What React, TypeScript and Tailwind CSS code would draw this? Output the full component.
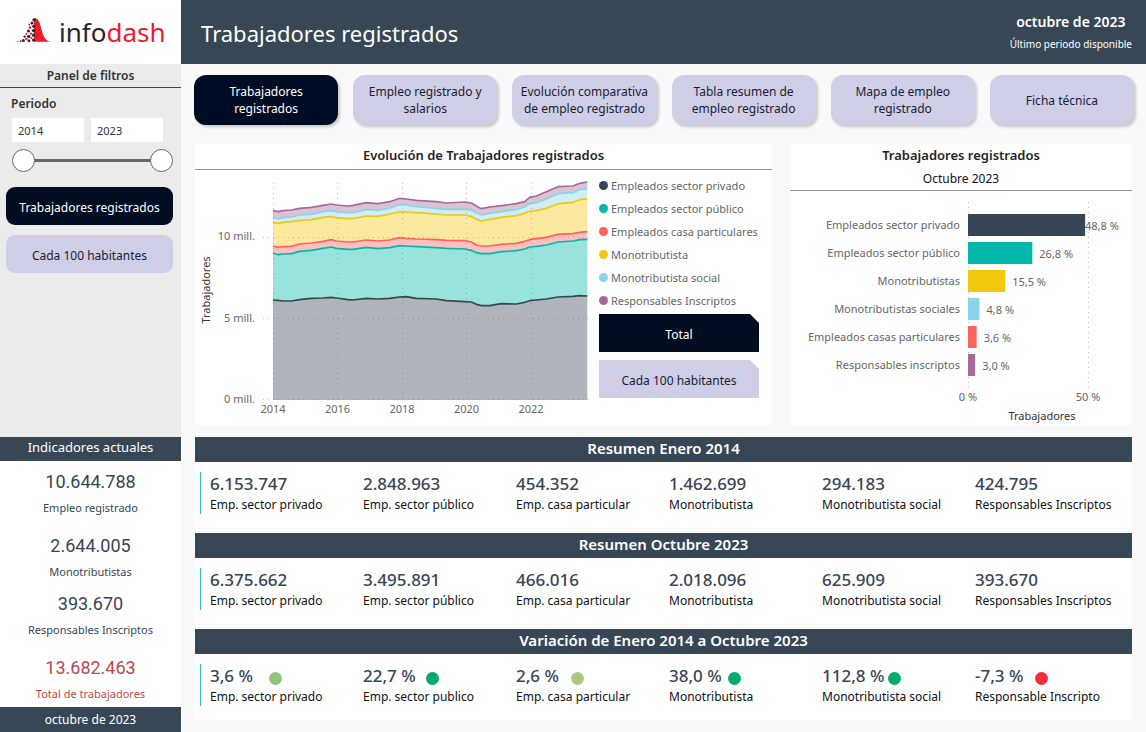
import { useState } from "react";
import clsx from "clsx";

const TABS = [
  "Trabajadores registrados",
  "Empleo registrado y salarios",
  "Evolución comparativa de empleo registrado",
  "Tabla resumen de empleo registrado",
  "Mapa de empleo registrado",
  "Ficha técnica",
];

// Stacked area plot, in plot units (943 wide, 654 down to the zero line).
const PLOT_X = [
  0, 15, 30, 55, 80, 115, 150, 175, 190, 225, 240, 280, 315, 350, 380, 400, 430, 490, 520, 575, 595,
  610, 625, 650, 685, 730, 755, 770, 790, 820, 855, 900, 920, 943,
];

const SERIES = [
  {
    name: "Empleados sector privado",
    color: "#374656",
    top: [
      354, 355, 357, 357, 353, 349, 348, 346, 348, 353, 354, 349, 351, 349, 345, 344, 349, 351, 356,
      359, 360, 367, 371, 371, 365, 366, 361, 356, 354, 351, 345, 343, 341, 342,
    ],
  },
  {
    name: "Empleados sector público",
    color: "#01b8aa",
    top: [
      213, 218, 216, 215, 208, 205, 199, 195, 199, 202, 202, 196, 200, 197, 191, 192, 194, 197, 199,
      201, 205, 212, 215, 215, 209, 206, 201, 195, 193, 189, 180, 177, 173, 172,
    ],
  },
  {
    name: "Empleados casa particulares",
    color: "#fd625e",
    top: [
      192, 196, 194, 193, 186, 183, 178, 173, 177, 180, 180, 174, 177, 174, 167, 169, 171, 173, 175,
      176, 180, 189, 192, 192, 187, 184, 178, 173, 170, 166, 157, 155, 151, 149,
    ],
  },
  {
    name: "Monotributista",
    color: "#f2c80f",
    top: [
      120, 124, 121, 119, 115, 113, 106, 104, 107, 110, 110, 102, 103, 96, 89, 90, 92, 96, 99, 99,
      103, 112, 117, 112, 106, 101, 94, 88, 86, 79, 65, 61, 53, 50,
    ],
  },
  {
    name: "Monotributista social",
    color: "#8ad4eb",
    top: [
      106, 111, 107, 105, 99, 97, 89, 86, 89, 92, 92, 82, 85, 78, 68, 69, 74, 79, 82, 82, 84, 93, 99,
      94, 89, 82, 75, 65, 62, 51, 35, 32, 23, 20,
    ],
  },
  {
    name: "Responsables Inscriptos",
    color: "#a66999",
    top: [
      85, 89, 86, 84, 79, 76, 70, 66, 69, 72, 70, 62, 65, 59, 49, 51, 55, 59, 63, 60, 63, 72, 80, 75,
      71, 65, 59, 46, 42, 29, 14, 12, 4, 0,
    ],
  },
];

const SHARES = [
  { name: "Empleados sector privado", value: 48.8, color: "#374656" },
  { name: "Empleados sector público", value: 26.8, color: "#01b8aa" },
  { name: "Monotributistas", value: 15.5, color: "#f2c80f" },
  { name: "Monotributistas sociales", value: 4.8, color: "#8ad4eb" },
  { name: "Empleados casas particulares", value: 3.6, color: "#fd625e" },
  { name: "Responsables inscriptos", value: 3.0, color: "#a66999" },
];

type Item = { value: string; label: string; dot?: string };

const SUMMARIES: { title: string; items: Item[] }[] = [
  {
    title: "Resumen Enero 2014",
    items: [
      { value: "6.153.747", label: "Emp. sector privado" },
      { value: "2.848.963", label: "Emp. sector público" },
      { value: "454.352", label: "Emp. casa particular" },
      { value: "1.462.699", label: "Monotributista" },
      { value: "294.183", label: "Monotributista social" },
      { value: "424.795", label: "Responsables Inscriptos" },
    ],
  },
  {
    title: "Resumen Octubre 2023",
    items: [
      { value: "6.375.662", label: "Emp. sector privado" },
      { value: "3.495.891", label: "Emp. sector público" },
      { value: "466.016", label: "Emp. casa particular" },
      { value: "2.018.096", label: "Monotributista" },
      { value: "625.909", label: "Monotributista social" },
      { value: "393.670", label: "Responsables Inscriptos" },
    ],
  },
  {
    title: "Variación de Enero 2014 a Octubre 2023",
    items: [
      { value: "3,6 %", label: "Emp. sector privado", dot: "ml-4 bg-[#8fc57c]" },
      { value: "22,7 %", label: "Emp. sector publico", dot: "ml-2.5 bg-[#05aa6f]" },
      { value: "2,6 %", label: "Emp. casa particular", dot: "ml-3 bg-[#aac97e]" },
      { value: "38,0 %", label: "Monotributista", dot: "ml-1.5 bg-[#05aa6f]" },
      { value: "112,8 %", label: "Monotributista social", dot: "ml-1 bg-[#05aa6f]" },
      { value: "-7,3 %", label: "Responsable Inscripto", dot: "ml-3 bg-[#ef3038]" },
    ],
  },
];

function points(ys: number[]) {
  return PLOT_X.map((x, i) => `${x},${ys[i]}`);
}

function Logo() {
  // [cx, cy, r, red?]
  const dots: [number, number, number, boolean][] = [
    [17, 1.8, 1.6, false], [15, 5, 1.5, false], [16.8, 8.3, 1.6, false], [12.2, 6.5, 0.9, true],
    [13, 9.6, 1.3, true], [16.6, 12.6, 1.7, false], [11.5, 13, 1.5, false], [14, 15.6, 1.2, true],
    [9.4, 15.8, 1.1, true], [16.6, 17.2, 1.6, false], [11.8, 18.4, 1.6, false], [7.6, 18.6, 1.2, false],
    [14.4, 20, 1.1, true], [9.4, 21, 1.2, true], [16.6, 22, 1.6, false], [12, 22.8, 1.4, false],
    [6.4, 22.4, 1.5, false], [3.6, 23, 1, true], [1, 23.4, 0.7, true],
  ];
  return (
    <svg className="h-7 w-[34px]" viewBox="0 0 34 28" aria-hidden="true">
      <path d="M17 0C21.500 0 22.500 4 24 9.500C26 17 27.500 23 34 23.800H17Z" fill="#ed1c2b" />
      {dots.map(([cx, cy, r, red]) => (
        <circle key={`${cx}-${cy}`} cx={cx} cy={cy} r={r} fill={red ? "#ed1c2b" : "#262626"} />
      ))}
    </svg>
  );
}

function PeriodFilter() {
  const [from, setFrom] = useState(2014);
  const [to, setTo] = useState(2023);
  const box = "h-6 w-[72px] bg-white px-1.5 text-[11px] text-[#333] outline-none";
  const range =
    "pointer-events-none absolute inset-0 h-6 w-full appearance-none bg-transparent [&::-webkit-slider-thumb]:pointer-events-auto [&::-webkit-slider-thumb]:h-[23px] [&::-webkit-slider-thumb]:w-[23px] [&::-webkit-slider-thumb]:appearance-none [&::-webkit-slider-thumb]:rounded-full [&::-webkit-slider-thumb]:border [&::-webkit-slider-thumb]:border-solid [&::-webkit-slider-thumb]:border-[#666] [&::-webkit-slider-thumb]:bg-white";
  return (
    <div role="group" aria-labelledby="periodo" className="px-3 pt-1.5">
      <h3 id="periodo" className="-ml-px text-[12px] leading-5 font-semibold text-[#333]">
        Periodo
      </h3>
      <div className="mt-1 flex gap-[7px]">
        <input aria-label="Desde" className={box} value={from} onChange={(e) => setFrom(Number(e.target.value))} />
        <input aria-label="Hasta" className={box} value={to} onChange={(e) => setTo(Number(e.target.value))} />
      </div>
      <div className="relative -mr-1 mt-1.5 flex h-6 items-center">
        <div className="mx-3 h-[3px] flex-1 bg-[#666]" />
        <input type="range" aria-label="Año inicial" className={range} min={2014} max={2023} value={from} onChange={(e) => setFrom(Number(e.target.value))} />
        <input type="range" aria-label="Año final" className={range} min={2014} max={2023} value={to} onChange={(e) => setTo(Number(e.target.value))} />
      </div>
    </div>
  );
}

function Kpi({ value, label, total }: { value: string; label: string; total?: boolean }) {
  return (
    <div className={clsx("text-center", total ? "text-[#b94a4a]" : "text-[#374656]")}>
      <div className="font-['Roboto',sans-serif] text-[18px] leading-7">{value}</div>
      <div className="text-[11px] leading-6">{label}</div>
    </div>
  );
}

function Sidebar() {
  return (
    <aside className="flex w-[181px] shrink-0 flex-col bg-[#ebebeb]">
      <div className="flex h-16 items-center gap-2 bg-white pl-[17px] text-[26px] text-[#262626]">
        <Logo />
        <span>
          info<span className="text-[#ed1c2b]">dash</span>
        </span>
      </div>
      <h2 className="h-6 border-b border-[#444] text-center text-[12px] leading-6 font-semibold text-[#333]">
        Panel de filtros
      </h2>
      <PeriodFilter />
      <div className="mt-[15px] flex flex-col gap-2.5 pr-2 pl-1.5 text-[12px]">
        <button className="h-[38px] rounded-[9px] bg-[#030d22] pt-1 whitespace-nowrap text-white">Trabajadores registrados</button>
        <button className="h-[38px] rounded-[9px] bg-[#cecfe6] pt-1 text-[#1b1b35]">Cada 100 habitantes</button>
      </div>
      <h2 className="mt-auto h-6 bg-[#384756] text-center text-[13px] leading-[21px] text-white">
        Indicadores actuales
      </h2>
      <div className="flex flex-col gap-1.5 bg-white pt-[7px] pb-px">
        <div className="flex flex-col gap-3">
          <Kpi value="10.644.788" label="Empleo registrado" />
          <Kpi value="2.644.005" label="Monotributistas" />
        </div>
        <div className="flex flex-col gap-3">
          <Kpi value="393.670" label="Responsables Inscriptos" />
          <Kpi value="13.682.463" label="Total de trabajadores" total />
        </div>
      </div>
      <div className="h-[25px] bg-[#384756] text-center text-[12px] leading-[25px] text-white">
        octubre de 2023
      </div>
    </aside>
  );
}

function AreaChart() {
  const base = PLOT_X.map(() => 654);
  return (
    <svg className="w-full" viewBox="0 0 400 255" role="img" aria-label="Evolución de Trabajadores registrados">
      <svg x="78" y="12" width="315" height="218" viewBox="0 0 945 654" overflow="visible">
        {SERIES.map((s, i) => {
          const under = i === 0 ? base : SERIES[i - 1].top;
          return (
            <polygon
              key={s.name}
              points={[...points(s.top), ...points(under).reverse()].join(" ")}
              fill={s.color}
              fillOpacity="0.4"
            />
          );
        })}
        {SERIES.map((s) => (
          <polyline key={s.name} points={points(s.top).join(" ")} fill="none" stroke={s.color} strokeWidth="5" strokeLinejoin="round" />
        ))}
      </svg>
      <g stroke="#777" strokeOpacity="0.45" strokeDasharray="1 4">
        {[67, 148, 229].map((y) => (
          <path key={y} d={`M68 ${y}.500H398`} />
        ))}
        {[78, 142, 207, 271, 336].map((x) => (
          <path key={x} d={`M${x}.500 13V230`} />
        ))}
      </g>
      <g fill="#666" fontSize="11">
        <text x="60" y="70" textAnchor="end">10 mill.</text>
        <text x="60" y="152" textAnchor="end">5 mill.</text>
        <text x="60" y="233" textAnchor="end">0 mill.</text>
        {[2014, 2016, 2018, 2020, 2022].map((year, i) => (
          <text key={year} x={78 + i * 64.5} y="243" textAnchor="middle">
            {year}
          </text>
        ))}
      </g>
      <text transform="translate(15 120) rotate(-90)" textAnchor="middle" fontSize="11" fill="#333">
        Trabajadores
      </text>
    </svg>
  );
}

function BarChart() {
  return (
    <svg className="w-full" viewBox="0 0 342 234" role="img" aria-label="Trabajadores registrados por categoría">
      <g stroke="#bbb" strokeDasharray="1 4">
        <path d="M178.500 11V199" />
        <path d="M298.500 11V199" />
      </g>
      {SHARES.map((s, i) => {
        const width = s.value * 2.4;
        const labelX = i === 0 ? 295 : 185 + width;
        return (
          <g key={s.name} fill="#666" fontSize="11">
            <text x="170" y={38 + i * 28} textAnchor="end">{s.name}</text>
            <rect x="178" y={23 + i * 28} width={width} height="22" fill={s.color} />
            <text x={labelX} y={39 + i * 28}>
              {`${s.value.toFixed(1).replace(".", ",")} %`}
            </text>
          </g>
        );
      })}
      <g fill="#666" fontSize="11" textAnchor="middle">
        <text x="178" y="210">0 %</text>
        <text x="298" y="210">50 %</text>
      </g>
      <text x="252" y="229" textAnchor="middle" fontSize="11" fill="#333">Trabajadores</text>
    </svg>
  );
}

function Summary({ title, items }: { title: string; items: Item[] }) {
  return (
    <section className="bg-white pb-3.5">
      <h2 className="h-[25px] bg-[#384756] text-center text-[15px] leading-[23px] font-semibold text-white">{title}</h2>
      <div className="mt-2.5 mr-1 ml-[5px] grid grid-cols-6 border-l border-[#2cc4b6] pl-[9px]">
        {items.map((item) => (
          <div key={item.label} className="whitespace-nowrap">
            <div className="flex h-6 items-center text-[17px] font-medium text-[#374656]">
              {item.value}
              {item.dot && <span className={clsx("mt-1 h-[13px] w-[13px] rounded-full", item.dot)} />}
            </div>
            <div className="text-[12px] leading-[18px] text-[#111]">{item.label}</div>
          </div>
        ))}
      </div>
    </section>
  );
}

export default function App() {
  const cut = "h-[38px] pt-1 text-[12px] [clip-path:polygon(0_0,calc(100%-9px)_0,100%_9px,100%_100%,0_100%)]";
  return (
    <div className="flex min-h-screen bg-[#f9f9f9] font-['Segoe_UI','Noto_Sans','Open_Sans',sans-serif]">
      <Sidebar />
      <div className="flex min-w-0 flex-1 flex-col">
        <header className="flex h-16 items-center justify-between bg-[#384756] pt-0.5 pr-3.5 pl-5 text-white">
          <h1 className="text-[22px]">Trabajadores registrados</h1>
          <div className="text-center">
            <div className="text-[14px] leading-[23px] font-semibold">octubre de 2023</div>
            <div className="text-[10px] leading-[23px]">Último periodo disponible</div>
          </div>
        </header>

        <main className="flex flex-col pt-[11px] pr-3 pb-[11px] pl-[13px]">
          <nav className="grid grid-cols-6 gap-[15px]">
            {TABS.map((tab, i) => (
              <button
                key={tab}
                className={clsx(
                  "h-[50px] rounded-xl px-1 text-[12px] leading-[17px] shadow-[2px_2px_3px_rgba(0,0,0,0.2)]",
                  i === 0 ? "bg-[#000c24] px-6 text-white" : "bg-[#cecfe6] text-[#1b1b35]",
                )}
              >
                {tab}
              </button>
            ))}
          </nav>

          <div className="mt-[19px] mr-0.5 ml-px flex gap-[18px]">
            <section className="flex-[577] bg-white">
              <h2 className="h-[26px] border-b border-[#999] text-center text-[13px] leading-[22px] font-semibold text-[#252423]">
                Evolución de Trabajadores registrados
              </h2>
              <div className="flex">
                <div className="min-w-0 flex-1">
                  <AreaChart />
                </div>
                <div className="mr-[13px] ml-1 w-40 pt-1">
                  <ul className="text-[11px] leading-[23px] text-[#666]">
                    {SERIES.map((s) => (
                      <li key={s.name} className="flex items-center gap-[3px] whitespace-nowrap">
                        <span className="h-[9px] w-[9px] shrink-0 rounded-full" style={{ background: s.color }} />
                        {s.name}
                      </li>
                    ))}
                  </ul>
                  <div className="mt-0.5 flex flex-col gap-2">
                    <button className={clsx(cut, "bg-[#030d22] text-white")}>Total</button>
                    <button className={clsx(cut, "bg-[#cecfe6] text-[#1b1b35]")}>Cada 100 habitantes</button>
                  </div>
                </div>
              </div>
            </section>

            <section className="flex-[342] bg-white">
              <div className="h-[47px] border-b border-[#999] text-center leading-[23px]">
                <h2 className="text-[13px] font-semibold text-[#252423]">Trabajadores registrados</h2>
                <p className="text-[12px] text-[#111]">Octubre 2023</p>
              </div>
              <BarChart />
            </section>
          </div>

          <div className="mt-3 mr-0.5 ml-px flex flex-col gap-[5px]">
            {SUMMARIES.map((s) => (
              <Summary key={s.title} {...s} />
            ))}
          </div>
        </main>
      </div>
    </div>
  );
}
